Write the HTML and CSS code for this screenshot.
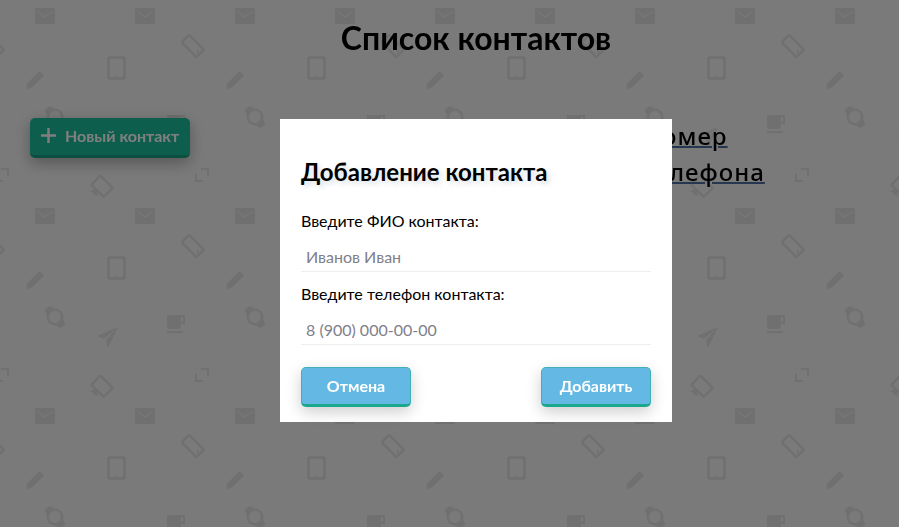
FILE: index.html
```html
<!DOCTYPE html>
<html lang="ru">
<head>
  <meta charset="UTF-8">
  <meta name="viewport" content="width=device-width, initial-scale=1.0">
  <title>Список контактов</title>
  <link rel="stylesheet" href="styles.css">
</head>
<body>

  <svg class="wallpaper" width="100%" height="100%" aria-hidden="true">
    <defs>
      <g id="phone">
        <rect x="187.500" y="35.500" width="10.500" height="21" rx="1.500" transform="rotate(-45 192.750 46)" class="line"/>
        <circle cx="198" cy="51.500" r="1.300" class="ico"/>
      </g>
      <g id="expand">
        <path d="M201 169H208V176M203 181H196V174" class="line thin"/>
      </g>
      <g id="mail">
        <rect x="35" y="8" width="20" height="16" rx="1.500" class="ico"/>
        <path d="M37 11L45 17L53 11" class="cut"/>
      </g>
      <pattern id="tile" width="200" height="200" patternUnits="userSpaceOnUse">
        <use href="#mail"/>
        <use href="#mail" x="100"/>
        <use href="#phone"/>
        <use href="#phone" x="-200"/>
        <!-- tablet -->
        <rect x="108.500" y="57.500" width="16" height="21" rx="1" class="line"/>
        <circle cx="116.500" cy="77" r="1.300" class="ico"/>
        <!-- pencil -->
        <path d="M26 89L27.500 83L39.500 71L44 75.500L32 87.500Z" class="ico"/>
        <!-- watch -->
        <circle cx="55" cy="117" r="7.200" class="line"/>
        <path d="M44.500 110.500L49 106L54 108L47 115ZM65.500 123.500L61 128L56 126L63 119Z" class="ico"/>
        <!-- plane -->
        <path d="M118 127L97 136L104 139ZM118 127L106 140L108 148Z" class="ico"/>
        <!-- coffee -->
        <path d="M167 115H185V124H181V125C181 128 179 129 177 129H171C169 129 167 128 167 125ZM181 117V122H183V117ZM167 131H183V133H167Z" class="ico" fill-rule="evenodd"/>
        <use href="#expand"/>
        <use href="#expand" x="-200"/>
        <!-- book -->
        <rect x="95.500" y="177.500" width="13" height="17.500" rx="1.500" transform="rotate(-45 102 186.250)" class="line"/>
        <path d="M90 191L96 189L98 197Z" class="ico"/>
      </pattern>
    </defs>
    <rect width="100%" height="100%" fill="url(#tile)"/>
  </svg>

  <div class="page">
    <h1 class="page-title">Список контактов</h1>
    <div class="toolbar">
      <button class="btn-new">
        <svg class="plus" width="15" height="15" viewBox="0 0 15 15"><path d="M6.300 0H8.700V6.300H15V8.700H8.700V15H6.300V8.700H0V6.300H6.300Z"/></svg>
        Новый контакт
      </button>
      <div class="table-head"><a href="#">Номер</a><br><a href="#">телефона</a></div>
    </div>
  </div>

  <div class="overlay">
    <form class="modal">
      <h2 class="modal-title">Добавление контакта</h2>
      <label class="field-label" for="fio">Введите ФИО контакта:</label>
      <input class="field" type="text" id="fio" placeholder="Иванов Иван">
      <label class="field-label" for="tel">Введите телефон контакта:</label>
      <input class="field" type="text" id="tel" placeholder="8 (900) 000-00-00">
      <div class="modal-actions">
        <button class="btn" type="button">Отмена</button>
        <button class="btn" type="button">Добавить</button>
      </div>
    </form>
  </div>

</body>
</html>
```

FILE: styles.css
```css
body {
  font-family: Lato, "Noto Sans", sans-serif;
  margin: 0;
  height: 527px;
  overflow: hidden;
  background-color: #f5f5f5;
  color: #000;
}
.wallpaper {
  position: fixed;
  top: 0;
  left: 0;
  z-index: -1;
}
.ico {
  fill: #e0e0e0;
}
.line {
  fill: none;
  stroke: #e0e0e0;
  stroke-width: 2.5;
}
.line.thin {
  stroke-width: 2;
}
.cut {
  fill: none;
  stroke: #f5f5f5;
  stroke-width: 1;
}
.page {
  padding: 14px 0 0 53px;
}
.page-title {
  margin: 0;
  height: 104px;
  font-size: 32px;
  line-height: 48px;
  font-weight: 700;
  text-align: center;
}
.toolbar {
  display: flex;
  align-items: flex-start;
}
.btn-new {
  display: flex;
  align-items: center;
  gap: 9px;
  width: 160px;
  height: 40px;
  margin-left: -23px;
  padding: 0 0 2px 11px;
  font-family: inherit;
  font-size: 16px;
  font-weight: 700;
  color: #fff;
  background-color: #1cbc9a;
  border: none;
  border-bottom: 3px solid #199f83;
  border-radius: 5px;
  box-shadow: 0 5px 15px rgba(0, 0, 0, 0.3);
}
.plus {
  fill: #fff;
}
.table-head {
  margin-left: 453px;
  font-family: "Noto Sans", sans-serif;
  font-size: 24px;
  font-weight: 500;
  line-height: 36px;
  letter-spacing: 1px;
}
.table-head a {
  color: #000;
  text-decoration: underline;
  text-decoration-color: #4d6d9d;
  text-decoration-thickness: 2px;
}
.overlay {
  position: fixed;
  top: 0;
  left: 0;
  width: 100%;
  height: 100%;
  background-color: rgba(0, 0, 0, 0.5);
}
.modal {
  position: absolute;
  top: 119px;
  left: 280px;
  box-sizing: border-box;
  width: 392px;
  height: 303px;
  padding: 36px 21px 0;
  background-color: white;
}
.modal-title {
  margin: 0 0 22px;
  font-size: 24px;
  line-height: 34px;
  font-weight: 700;
  text-shadow: 3px 3px 5px rgba(130, 150, 170, 0.3);
}
.field-label {
  display: block;
  font-size: 16px;
  line-height: 20px;
}
.field {
  display: block;
  box-sizing: border-box;
  width: 100%;
  height: 41px;
  margin-bottom: 12px;
  padding: 11px 5px 0;
  font-family: inherit;
  font-size: 16px;
  border: none;
  border-bottom: 1px solid #eee;
  outline: none;
}
.field::placeholder {
  color: #80808a;
}
.modal-actions {
  display: flex;
  justify-content: space-between;
  margin-top: 22px;
}
.btn {
  width: 110px;
  height: 40px;
  padding: 0 0 2px;
  font-family: inherit;
  font-size: 16px;
  font-weight: 700;
  color: white;
  background-color: #64b9e4;
  border: 1px solid #3fb0b8;
  border-bottom: 3px solid #1aa88f;
  border-radius: 5px;
  box-shadow: 0 5px 15px rgba(0, 0, 0, 0.2);
}
```
